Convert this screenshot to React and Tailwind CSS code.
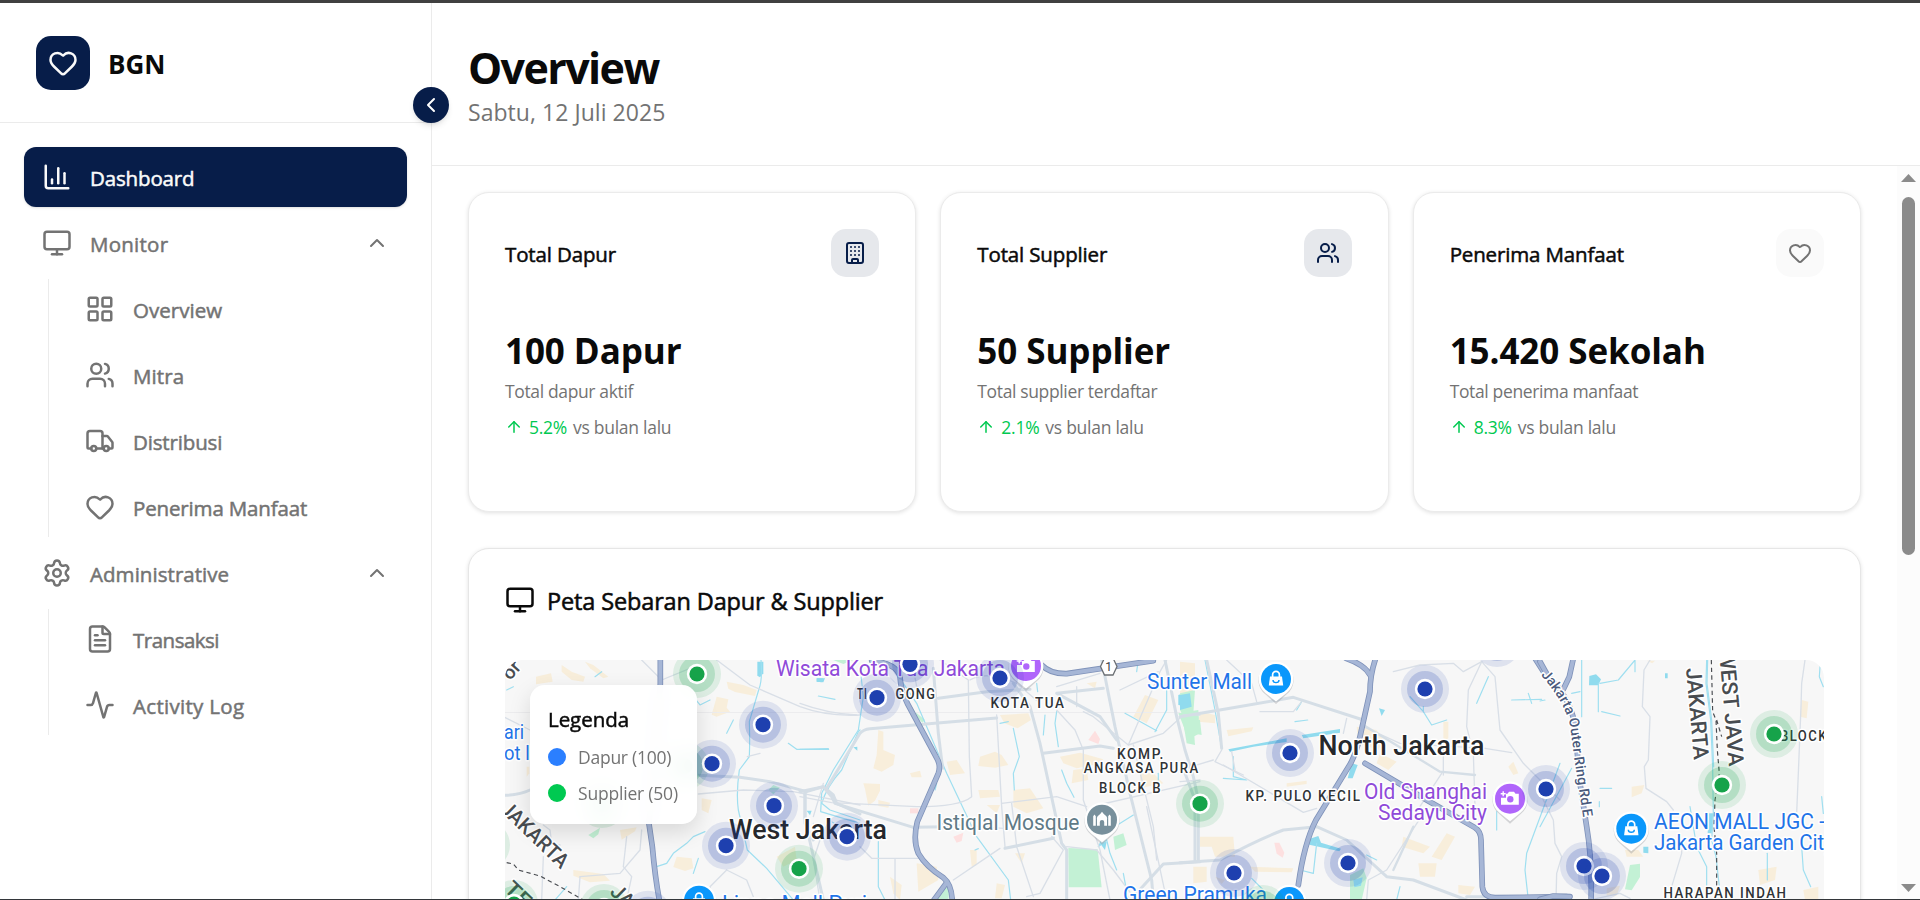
import React from "react";
import {
  Activity,
  ArrowUp,
  Building,
  ChartColumn,
  ChevronLeft,
  ChevronUp,
  FileText,
  Heart,
  LayoutGrid,
  Monitor,
  Settings,
  Truck,
  Users,
} from "lucide-react";

/* ---------- sidebar ---------- */

function NavItem({ icon: Icon, label, active, expandable, tracking = "tracking-[-0.15px]" }) {
  return (
    <div
      className={
        "flex h-[60px] shrink-0 items-center rounded-xl px-[18px] " +
        (active ? "bg-[#071d49] text-[#fafafa] shadow-sm" : "text-[#737373]")
      }
    >
      <Icon size={30} />
      <span className={"ml-[18px] pt-[2px] text-[20.5px] leading-[30px] font-medium [-webkit-text-stroke:0.5px_currentColor] " + tracking}>{label}</span>
      {expandable && <ChevronUp size={24} className="ml-auto" />}
    </div>
  );
}

function SubMenu({ children }) {
  return <div className="ml-6 flex flex-col gap-1.5 border-l border-[#ebebeb] pl-[18px]">{children}</div>;
}

function Sidebar() {
  return (
    <aside className="relative flex w-[432px] shrink-0 flex-col border-r border-[#ebebeb]">
      <div className="flex h-[120px] items-center border-b border-[#ebebeb] px-9 pb-[19px] pt-[33px]">
        <div className="flex h-[54px] w-[54px] -translate-y-[7px] items-center justify-center rounded-[15px] bg-[#071d49] text-[#fafafa]">
          <Heart size={30} />
        </div>
        <span className="ml-[18px] -translate-y-[5px] text-[26px] font-bold text-[#0a0a0a]">BGN</span>
      </div>
      <nav className="flex flex-col gap-1.5 px-6 pt-6">
        <NavItem icon={ChartColumn} label="Dashboard" active />
        <NavItem icon={Monitor} label="Monitor" expandable tracking="tracking-[0.25px]" />
        <SubMenu>
          <NavItem icon={LayoutGrid} label="Overview" tracking="tracking-[0.05px]" />
          <NavItem icon={Users} label="Mitra" tracking="tracking-[0.1px]" />
          <NavItem icon={Truck} label="Distribusi" />
          <NavItem icon={Heart} label="Penerima Manfaat" />
        </SubMenu>
        <NavItem icon={Settings} label="Administrative" expandable tracking="tracking-[0.05px]" />
        <SubMenu>
          <NavItem icon={FileText} label="Transaksi" tracking="tracking-[-0.5px]" />
          <NavItem icon={Activity} label="Activity Log" tracking="tracking-[0.3px]" />
        </SubMenu>
      </nav>
      <button className="absolute -right-[18px] top-[84px] z-10 flex h-9 w-9 items-center justify-center rounded-full bg-[#071d49] text-white shadow-md">
        <ChevronLeft size={24} />
      </button>
    </aside>
  );
}

/* ---------- stat cards ---------- */

const STATS = [
  { title: "Total Dapur", icon: Building, box: "bg-[#e6e8ec] text-[#071d49]", value: "100 Dapur", note: "Total dapur aktif", pct: "5.2%" },
  { title: "Total Supplier", icon: Users, box: "bg-[#e6e8ec] text-[#071d49]", value: "50 Supplier", note: "Total supplier terdaftar", pct: "2.1%" },
  { title: "Penerima Manfaat", icon: Heart, box: "bg-[#fafafa] text-[#737373]", value: "15.420 Sekolah", note: "Total penerima manfaat", pct: "8.3%" },
];

function StatCard({ title, icon: Icon, box, value, note, pct }) {
  return (
    <div className="h-80 rounded-[21px] border border-[#ebebeb] bg-white p-9 shadow-[0_1px_4px_rgba(0,0,0,0.12)]">
      <div className="flex h-12 items-center justify-between">
        <h3 className="pt-[3px] text-[20.5px] font-medium tracking-[-0.15px] text-[#0a0a0a] [-webkit-text-stroke:0.5px_currentColor]">{title}</h3>
        <div className={"flex h-12 w-12 items-center justify-center rounded-[15px] " + box}>
          <Icon size={24} />
        </div>
      </div>
      <p className="mt-[47px] text-[35px] leading-[54px] font-bold tracking-[-0.08px] text-[#0a0a0a]">{value}</p>
      <p className="mt-[1px] text-[17.5px] leading-[24px] tracking-[-0.36px] text-[#737373]">{note}</p>
      <p className="mt-3 flex items-center text-[17.5px] leading-[24px] tracking-[-0.27px] text-[#737373]">
        <ArrowUp size={18} className="text-[#00c951]" />
        <span className="ml-1.5 text-[#00c951]">{pct}</span>
        <span className="ml-1.5">vs bulan lalu</span>
      </p>
    </div>
  );
}

/* ---------- map ---------- */

// Each tile group is drawn at three times the page scale.
const TILES = [
  {
    at: "translate(460 540) scale(0.33333)",
    beige: [
      "M305 375l30 20 40 15-5 15-35-5-30-25z", "M375 365l25 10 45 35-15 5-40-30z", "M228 410l45-10 5 25-50 8z",
      "M800 425l50 10 40 15-5 18-60-12-20-10z", "M770 470l35 8-5 25 10 12-40 15-15-6z",
      "M650 950l45 5 5 30-25 8-35-12z", "M725 775l30 5-10 40-20-10z", "M480 870l50-8-5 12-40 25z",
      "M340 990l90 12 20 20-60 5-50-20z", "M950 950l55-30 5 40-40 20z", "M200 680l8 0 0 20-8 10z",
    ],
    green: ["M385 885l35-22-5 20-15 12z", "M925 750l15-15 20 8-20 20z", "M1120 360l60 0-30 12z"],
    water: ["M892 365l18 0 0 35-10 12-8-5z", "M1070 415l25 0-5 12-20-2z", "M1040 812l15 0-5 14z"],
    stream: [
      "M903 360Q908 420 896 450L868 545Q870 600 868 650L838 690Q828 760 835 810L862 930L920 985L1000 1080",
      "M1200 570L1195 575L1145 690Q1100 740 1085 790L1110 810L1200 840",
      "M985 610L1010 628L1106 628", "M820 540L800 580", "M590 980L620 970L640 940L680 910L700 890L735 875",
      "M405 410L425 395", "M700 470L720 495L750 480", "M1075 468L1125 478", "M715 955L700 1000",
      "M320 1040L285 1080", "M140 450l20-10", "M1105 840L1160 870",
    ],
    minor: [
      "M545 360L605 420L690 385", "M500 890L490 980L515 1010L500 1080", "M250 855L270 870L275 910L300 915",
      "M545 870L540 930L480 1000L360 1010", "M770 360L870 435L1020 500Q1100 530 1200 525", "M862 650L900 640",
      "M130 530L210 570", "M800 990L750 1040L760 1080M800 990L860 1020L880 1070", "M360 1010L355 1080M250 950L245 1080",
      "M715 762L850 750L1000 755L1200 795", "M1060 850L1080 900L1060 960L1080 1080",
    ],
    major: [
      "M130 766Q180 765 210 750", "M715 706L840 712L930 725L1040 755L1090 740L1120 765L1130 790L1200 822", "M1035 755V850L1060 900",
    ],
    hwy: ["M601 360V432L567 852L577 920Q586 1020 600 1090"],
    pink: [],
  },
  {
    at: "translate(800 640) scale(0.33333)",
    beige: [
      "M235 270l15 5 0 55 35 15-5 30-35 20-25-10 10-40z", "M330 400l30-8 5 20-30 0z", "M190 430l50 2 0 20-15 30-20 15-10-50z",
      "M235 480l35 8-5 15-30-5z", "M540 350l45-15 20 10 20 30-40 8-50-5z", "M440 365l30-5 25 40-45 5z", "M600 225l85-5 8 20-40 25-40-15z",
      "M780 350l60-12 70 20-20 15-60 12-40-15z", "M820 390l40-5 5 35-50 10z", "M1035 165l40 15-35 70-40-20z", "M640 450l50-5 40 60-50 15-40-20z",
      "M535 450l60 0 5 20-60 5z", "M560 495l40 0-10 25z", "M350 670l60 10 5 40-60 35z", "M270 710l35 25-5 45-20-20z",
      "M510 630l20 0 0 45-15 5z", "M860 130l30-5-5 20z", "M1020 400l40 0 30 30-70 15z", "M645 640l30 0-10 30z", "M590 730l25 5-10 40-20 0z",
    ],
    green: ["M805 624L893 628L905 742L806 742z", "M940 590l30-10 10 35-35 15z", "M320 175l25 40 30 25-8 8-45-50z", "M300 60l40 0-5 10z", "M410 760l40-25-5 45-30 0z", "M1135 220l60-10 5 70-20 10-25-20z", "M1150 250l30-5 5 70-25-5z"],
    water: ["M1135 165l30-10 15 25-15 20-30-5z", "M50 115l20 0-5 12-15-2z", "M160 322l12-2 0 12z", "M900 610l20-5-5 25z"],
    stream: [
      "M180 80L190 170L175 270L100 390L65 460L62 515L180 550", "M290 100L350 190L410 330L440 400L530 590L625 720L632 780",
      "M640 265L658 350L640 400L643 450", "M735 225L730 285", "M770 215L765 250L775 320", "M785 390L800 430L822 472", "M975 220L1070 272",
      "M1100 120V210L1065 275", "M235 605V740L255 780", "M1000 525L920 575L895 620L920 600L930 640L950 690", "M0 328L85 326", "M600 250l25-5",
      "M1015 60L1010 95", "M970 700L985 780", "M525 630l10-4", "M405 450l5-20", "M1075 400V420", "M710 130l3 25",
    ],
    minor: [
      "M0 190Q80 220 170 225", "M340 85L350 140L415 175", "M420 60L505 120L508 350L515 470Q480 500 350 500L95 488L0 470", "M590 225L605 500L615 620",
      "M510 120Q560 90 650 130L720 190", "M635 490L650 620L700 770", "M770 210L825 270L850 330V480L900 630L930 780",
      "M850 215L880 230L985 315L1090 280L1150 225L1200 225", "M985 315L1080 95L1100 60", "M1000 315L1060 560L1070 660",
      "M180 620L215 655L360 655M285 655V780", "M460 720L600 625", "M830 140V200M770 140L900 100", "M895 495L1200 425",
      "M755 590L790 630L720 760L680 770", "M800 620L890 630L940 690L1000 770", "M1040 500L1100 780", "M605 490L770 470L860 500",
      "M415 550L610 565", "M70 430L40 530", "M1075 95L960 150",
    ],
    major: [
      "M0 455L70 440L95 470L105 490L340 562L440 560", "M80 445L180 280Q190 268 210 266L590 234",
      "M400 85L415 280L428 385", "M415 175L560 155L690 148", "M640 130L690 200L720 310L785 610L800 630V780",
      "M905 60L945 260L990 460L1055 720L1060 780", "M770 160L910 145M770 160L900 230L950 300", "M730 340L900 318L940 325", "M615 625L760 595V580",
      "M1095 60L1130 230L1155 330L1180 410L1195 480V660", "M1000 770L1090 672L1200 665", "M15 460V540L70 780",
    ],
    hwy: [
      "M215 62Q290 70 300 110Q302 150 322 190L408 350Q424 375 415 400L352 545Q338 600 355 640Q378 680 430 713Q457 735 457 790",
      "M725 75Q750 102 800 101L1060 62", "M440 728L402 780",
    ],
    pink: ["M865 300l20-28 15 25-5 15z", "M460 590l30-12-5 25-15 5z", "M330 505l25 0 0 15-25 0z"],
  },
  {
    at: "translate(1180 640) scale(0.33333)",
    beige: [
      "M0 65l45 5 0 70-30 50-15-5z", "M60 215l45 10 0 25-50-5z", "M140 270l80-8-5 12-70 15z", "M530 260l60 10 20 30-15 30-60-20z", "M600 340l50 25-25 25-35-20z",
      "M790 245l15 0 0 50-15 10z", "M670 590l80 30-20 20-65-20z", "M800 580l25 10-40 70-30-10z", "M715 670l55 0-5 40-45 0z", "M835 735l50 5-15 25-35-5z",
      "M60 590l100 0 5 60-60 0-10-30-35 0z", "M210 680l130 5-5 12-110-2z", "M320 430l60-8 0 10-60 8z", "M985 380l15-15 15 35-15 5z", "M40 680l40 0 0 45-40 5z", "M105 710l30 10-10 12z",
    ],
    green: ["M0 160l45-10-5 70-25 20-15-30z", "M10 235l50 5 5 45-50-10z", "M510 705l40-20 10 30-15 65-35 0z"],
    water: ["M145 328L320 295V306L220 320L150 335z", "M365 285L480 267V278L370 295z", "M515 370l18 5-15 40-15 0z", "M597 205l18 5-10 18z", "M385 598l30-10 8 20 60 18-5 8-90-20z", "M520 720l28-8-5 25-20 5z", "M0 165l30-5 5 40-35 10z"],
    stream: [
      "M75 60L105 210L125 325", "M160 350V410L200 420L130 415", "M690 170L730 215L755 255L800 240M730 215V200", "M890 190L925 110", "M995 180L1085 178M1045 160l10 30",
      "M1140 370L1040 640L1035 690L1045 780", "M950 515V570", "M410 610L400 700L360 690", "M215 715L250 750", "M345 245l38-5M350 210l15-25", "M660 740l-10 40", "M560 645l30 15",
    ],
    minor: [
      "M140 60L215 130L230 185", "M240 215H340L365 185", "M640 95L720 75L820 70L850 95L905 65L945 110L960 270L1030 370L1140 480", "M905 65L865 150L860 260L880 340L885 500",
      "M125 330L105 365L190 405M155 335L165 390", "M130 375L370 517L410 505", "M500 235L490 280", "M730 520L620 690L565 720L560 780", "M785 400L700 530M790 405V320",
      "M0 425L60 420M0 390L100 360", "M915 325L995 338", "M550 260L660 310L915 325",
    ],
    major: [
      "M0 230L150 205L340 172L550 240", "M0 668L120 660Q230 600 310 570L410 560L500 600L620 710L700 720L860 780",
      "M15 400L45 480V660", "M80 60L115 220L125 325", "M860 770L920 770",
    ],
    thin: ["M550 255L780 395L885 405", "M640 690L700 560"],
    hwy: [
      "M498 55Q555 75 570 105", "M587 55Q570 105 570 155L540 290Q530 335 512 370L408 540Q372 610 355 735",
      "M555 370L660 432L740 480L885 563Q903 575 903 600L907 740Q910 772 945 773L1160 770", "M1065 55L1100 110",
    ],
    pink: ["M283 608l15 0 15 30-5 15-18-12z"],
  },
  {
    at: "translate(1540 640) scale(0.33333)",
    beige: [
      "M785 180l20 5-5 50-20-5z", "M275 440l38-5-8 25-30 12z", "M655 690l55-10-5 40-45 15z", "M320 62l25 0-8 8z", "M255 630l40 0 15 20-50 0z", "M790 750l45-10 0 40-40 0z", "M200 745l40-8-10 30-30 0z",
    ],
    green: ["M270 675l30-4 0 40-25 40-20-3z"],
    water: ["M148 108l20-5 15 15-8 18-28 0z", "M375 100l8 0 0 15-8 0z", "M505 520l15 0-5 60-12 0z", "M310 620l15 0 0 20-15-2z"],
    stream: [
      "M125 60V230", "M175 130V215M185 215L240 228M180 130L235 120L285 60V95", "M95 385L0 560", "M180 445H215M178 485V500",
      "M450 500L470 620L500 680V740", "M840 80L838 110L850 140M845 470L850 520", "M682 640V720", "M785 620L790 690L812 740", "M95 160L120 155M0 183L15 180",
      "M500 60L498 130L512 240L518 380L520 520L515 600L528 650L538 740", "M503 60L501 130L515 240L521 380",
    ],
    minor: [
      "M330 60L312 90L307 200L330 230L325 360L313 380L318 445L380 485L400 510", "M795 60L785 130L783 200L775 400L770 520", "M425 600V640L395 740",
      "M0 460L40 540L45 610L65 650L50 700L48 780", "M150 780L240 760L270 775",
    ],
    major: [],
    hwy: ["M0 65L25 110Q88 170 104 250L120 430L140 560Q157 660 153 790", "M100 55L88 110L70 148", "M0 778L40 768L90 770"],
    pink: [],
  },
];

const BOUNDARIES = [
  { at: "translate(460 540) scale(0.33333)", d: "M140 968L160 972L175 990L240 1008L300 1040L370 1080" },
  { at: "translate(1540 640) scale(0.33333)", d: "M514 60L518 215L528 240L532 330L538 400L525 480L522 560L530 640L530 740M530 240L545 290" },
];

const BLUE_DOTS = [
  [763, 724.7], [712, 763.7], [774, 805.7], [726, 845.7], [847, 836.7], [648, 914.7], [910, 664.3], [877, 697.7], [1000, 678],
  [1425, 689], [1290, 753], [1546, 789], [1348, 863], [1234, 873], [1497, 643], [1584, 866], [1602, 876],
];
const GREEN_DOTS = [
  [697, 674], [799, 868.7], [514, 904], [604, 908], [602, 804], [685, 766], [486, 845], [1200, 803.7], [1263, 909], [1774, 734], [1722, 785],
];

// x, y, width, text, size, colour, weight
const LABELS = [
  [776, 676, 229, "Wisata Kota Tua Jakarta", 21.5, "#8f4ad9", 400],
  [857, 699, 11, "TI", 14, "#2f3336", 500],
  [895.5, 699, 41, "GONG", 14, "#2f3336", 500],
  [990.5, 708.3, 75, "KOTA TUA", 14, "#2f3336", 500],
  [1147, 689, 105, "Sunter Mall", 21.8, "#1f74e8", 400],
  [1117, 759.3, 48, "KOMP.", 14, "#2f3336", 500],
  [1083.7, 773, 116, "ANGKASA PURA", 14, "#2f3336", 500],
  [1099, 793, 63, "BLOCK B", 14, "#2f3336", 500],
  [936.5, 830, 143, "Istiqlal Mosque", 21.8, "#607a86", 400],
  [729, 839.3, 158, "West Jakarta", 27, "#26282c", 500],
  [1318.5, 755, 166, "North Jakarta", 27, "#26282c", 500],
  [1245.5, 801, 116, "KP. PULO KECIL", 14, "#2f3336", 500],
  [1364, 798.5, 123, "Old Shanghai", 21.8, "#8f4ad9", 400],
  [1378, 820, 109, "Sedayu City", 21.8, "#8f4ad9", 400],
  [1780, 740.7, 48, "BLOCK", 14, "#2f3336", 500],
  [1654, 829, 171, "AEON MALL JGC -", 21.8, "#1f74e8", 400],
  [1654, 850, 180, "Jakarta Garden City", 21.8, "#1f74e8", 400],
  [1663.5, 897.9, 124, "HARAPAN INDAH", 14, "#2f3336", 500],
  [1123, 902, 144, "Green Pramuka", 21.8, "#1f74e8", 400],
  [722, 911, 145, "Lippo Mall Puri", 21.8, "#1f74e8", 400],
  [504, 739, 20, "ari", 21, "#1f74e8", 400],
  [504, 760, 26, "ot I", 21, "#1f74e8", 400],
];

// x, y, angle, width, text, size
const ROTATED = [
  [499, 810, 44, 86, "JAKARTA", 21],
  [503, 890, 44, 45, "TEN", 21],
  [609, 893, 44, 86, "JAKARTA", 21],
  [510, 681, -48, 18, "or", 19],
  [1686, 668.5, 85, 92, "JAKARTA", 21.5],
  [1719, 651, 85, 116, "WEST JAVA", 21.5],
];

function Pin({ x, y, color, children }) {
  return (
    <g transform={`translate(${x} ${y})`}>
      <path d="M0 24L-11 14A17.6 17.6 0 1 1 11 14z" fill="#8b8f94" opacity="0.35" transform="translate(0 1)" />
      <path d="M0 22.5L-10.5 14A17.4 17.4 0 1 1 10.5 14z" fill="#fff" />
      <circle r="15" fill={color} />
      {children}
    </g>
  );
}

function Bag() {
  return (
    <g>
      <path d="M-6-2.5H6L7.2 6.6H-7.2z" fill="#fff" />
      <path d="M-3.4-2V-4.2a3.4 3.4 0 0 1 6.8 0V-2" fill="none" stroke="#fff" strokeWidth="1.7" />
      <path d="M-3 1a3 2.6 0 0 0 6 0" fill="none" stroke="#0a97fb" strokeWidth="1.4" />
    </g>
  );
}

function Camera() {
  return (
    <g>
      <path d="M-4-5h1.500l1.500-2h5l1.500 2h3.300V6H-9V-1h5z" fill="#fff" />
      <circle cy="0.5" cx="0.3" r="3.2" fill="#b065fb" />
      <path d="M-6.800-7.500v5M-9.300-5h5" stroke="#fff" strokeWidth="1.4" />
    </g>
  );
}

function Mosque() {
  return (
    <path d="M-8.8 6V-3.5l1.3-1.8 1.3 1.8V6zM-5 6V0q-.6-1.6.6-3.4Q-2-5 0-8 2-5 4.4-3.4 5.6-1.6 5 0V6H2.2V2.4a2.2 2.2 0 0 0-4.4 0V6zM6.2 6V-3.5l1.3-1.8 1.3 1.8V6z" fill="#fff" />
  );
}

function Dot({ x, y, color }) {
  return (
    <g>
      <circle cx={x} cy={y} r="24" fill={color} opacity="0.11" />
      <circle cx={x} cy={y} r="18" fill={color} opacity="0.2" />
      <circle cx={x} cy={y} r="10.2" fill="#fff" />
      <circle cx={x} cy={y} r="7.6" fill={color} />
    </g>
  );
}

function Strokes({ list = [], color, width }) {
  return list.map((d, i) => (
    <path key={i} d={d} fill="none" stroke={color} strokeWidth={width} strokeLinejoin="round" strokeLinecap="round" />
  ));
}

function MapCanvas() {
  return (
    <svg viewBox="505 660 1319 240" className="block h-60 w-full bg-[#f7f7f7]" fontFamily="Roboto, sans-serif">
      {TILES.map((t, i) => (
        <g key={i} transform={t.at}>
          {t.beige.map((d, k) => <path key={k} d={d} fill="#f8eedb" />)}
          {t.green.map((d, k) => <path key={k} d={d} fill="#c3f1d5" />)}
          {t.pink.map((d, k) => <path key={k} d={d} fill="#fde0e0" />)}
          {t.water.map((d, k) => <path key={k} d={d} fill="#90dbee" />)}
        </g>
      ))}
      <path d="M505 712.5H1180" stroke="#ececee" strokeWidth="1" />
      {TILES.map((t, i) => (
        <g key={i} transform={t.at}>
          <Strokes list={t.stream} color="#9fdff0" width={3.6} />
          <Strokes list={t.minor} color="#d9dfe7" width={4} />
          <Strokes list={t.thin} color="#d5dee6" width={7} />
          <Strokes list={t.major} color="#d5dee6" width={9} />
        </g>
      ))}
      {TILES.map((t, i) => (
        <g key={i} transform={t.at}>
          <Strokes list={t.hwy} color="#7f92b9" width={17} />
          <Strokes list={t.hwy} color="#a6b6d6" width={12} />
        </g>
      ))}
      {BOUNDARIES.map((b, i) => (
        <path key={i} d={b.d} transform={b.at} fill="none" stroke="#4a4d52" strokeWidth="3.5" strokeDasharray="13 10" />
      ))}

      <g stroke="#fff" strokeWidth="3" strokeLinejoin="round" paintOrder="stroke">
        {LABELS.map(([x, y, w, text, size, fill, weight], i) => (
          <text key={i} x={x} y={y} textLength={w} lengthAdjust="spacingAndGlyphs" fontSize={size} fontWeight={weight} fill={fill} letterSpacing={size < 15 ? 1.6 : 0}>{text}</text>
        ))}
        {ROTATED.map(([x, y, a, w, text, size], i) => (
          <text key={i} transform={`translate(${x} ${y}) rotate(${a})`} textLength={w} lengthAdjust="spacingAndGlyphs" fontSize={size} fontWeight="500" fill="#484c50">{text}</text>
        ))}
        <path id="ring-road" d="M1540.5 675Q1566 703 1570.5 728L1574.5 760L1584 822" fill="none" stroke="none" />
        <text fontSize="14" fill="#4a5a7c" fontWeight="500">
          <textPath href="#ring-road" textLength="152">Jakarta Outer Ring Rd E</textPath>
        </text>
      </g>

      <path d="M1104.5 658h8.500l4 8.500-4 8.500h-8.500l-4-8.500z" fill="#fff" stroke="#6b6f73" strokeWidth="1.3" />
      <text x="1108.700" y="671" textAnchor="middle" fontSize="12" fill="#3c4043">1</text>

      <Pin x={1026} y={666} color="#b065fb"><Camera /></Pin>
      <Pin x={1276} y={679} color="#0a97fb"><Bag /></Pin>
      <Pin x={1510} y={798.7} color="#b065fb"><Camera /></Pin>
      <Pin x={1631.3} y={828.7} color="#0a97fb"><Bag /></Pin>
      <Pin x={1102} y={819.7} color="#78909c"><Mosque /></Pin>
      <Pin x={699} y={900.7} color="#0a97fb"><Bag /></Pin>
      <Pin x={1289.3} y={902} color="#0a97fb"><Bag /></Pin>

      {GREEN_DOTS.map(([x, y], i) => <Dot key={i} x={x} y={y} color="#16a34a" />)}
      {BLUE_DOTS.map(([x, y], i) => <Dot key={i} x={x} y={y} color="#1e40af" />)}
    </svg>
  );
}

function Legend() {
  return (
    <div className="absolute left-[25px] top-[25px] h-[139px] w-[167px] rounded-[15px] bg-white/95 px-[18px] pt-[19px] shadow-[0_8px_22px_rgba(0,0,0,0.13)] backdrop-blur-sm">
      <p className="text-[20.5px] leading-[30px] font-medium tracking-[-0.05px] text-[#0a0a0a] [-webkit-text-stroke:0.5px_currentColor]">Legenda</p>
      <div className="mt-[11px] flex h-6 items-center gap-3">
        <span className="h-[18px] w-[18px] rounded-full bg-[#2b7fff]" />
        <span className="text-[17.5px] tracking-[-0.25px] text-[#737373]">Dapur (100)</span>
      </div>
      <div className="mt-3 flex h-6 items-center gap-3">
        <span className="h-[18px] w-[18px] rounded-full bg-[#00c951]" />
        <span className="text-[17.5px] tracking-[-0.2px] text-[#737373]">Supplier (50)</span>
      </div>
    </div>
  );
}

/* ---------- page ---------- */

function Scrollbar() {
  return (
    <div className="flex w-[23px] shrink-0 flex-col items-center bg-[#fcfcfc] pb-[7px] pt-2">
      <svg width="15" height="8" viewBox="0 0 15 8" className="shrink-0"><path d="M7.500 0L15 8H0z" fill="#8b8b8b" /></svg>
      <div className="mt-[15px] h-[358px] w-[13px] shrink-0 rounded-full bg-[#8b8b8b]" />
      <svg width="15" height="8" viewBox="0 0 15 8" className="mt-auto shrink-0"><path d="M0 0H15L7.500 8z" fill="#8b8b8b" /></svg>
    </div>
  );
}

export default function App() {
  return (
    <div className="flex h-[900px] w-[1920px] overflow-hidden border-b border-t-[3px] border-b-[#33363a] border-t-[#404040] bg-white font-['Open_Sans','Noto_Sans',sans-serif]">
      <Sidebar />
      <div className="flex min-w-0 flex-1 flex-col">
        <header className="h-[163px] shrink-0 border-b border-[#ebebeb] px-9 pt-[35px]">
          <h1 className="text-[43px] leading-[60px] font-bold tracking-[-1.6px] text-[#0a0a0a]">Overview</h1>
          <p className="mt-px text-[23px] leading-[27px] tracking-[0.05px] text-[#737373]">Sabtu, 12 Juli 2025</p>
        </header>
        <div className="flex min-h-0 flex-1">
          <main className="min-w-0 flex-1 overflow-hidden pl-9 pr-9 pt-[26px]">
            <div className="grid grid-cols-3 gap-6">
              {STATS.map((s) => <StatCard key={s.title} {...s} />)}
            </div>
            <section className="mt-9 h-[560px] rounded-[21px] border border-[#e6e6e6] bg-white p-9 shadow-[0_1px_4px_rgba(0,0,0,0.12)]">
              <h2 className="flex h-[30px] items-center gap-3 text-[#0a0a0a]">
                <Monitor size={30} />
                <span className="pt-[3px] text-[23.5px] font-medium tracking-[-0.14px] [-webkit-text-stroke:0.55px_currentColor]">Peta Sebaran Dapur &amp; Supplier</span>
              </h2>
              <div className="relative mt-[45px] overflow-hidden rounded-t-[18px]">
                <MapCanvas />
                <Legend />
              </div>
            </section>
          </main>
          <Scrollbar />
        </div>
      </div>
    </div>
  );
}
